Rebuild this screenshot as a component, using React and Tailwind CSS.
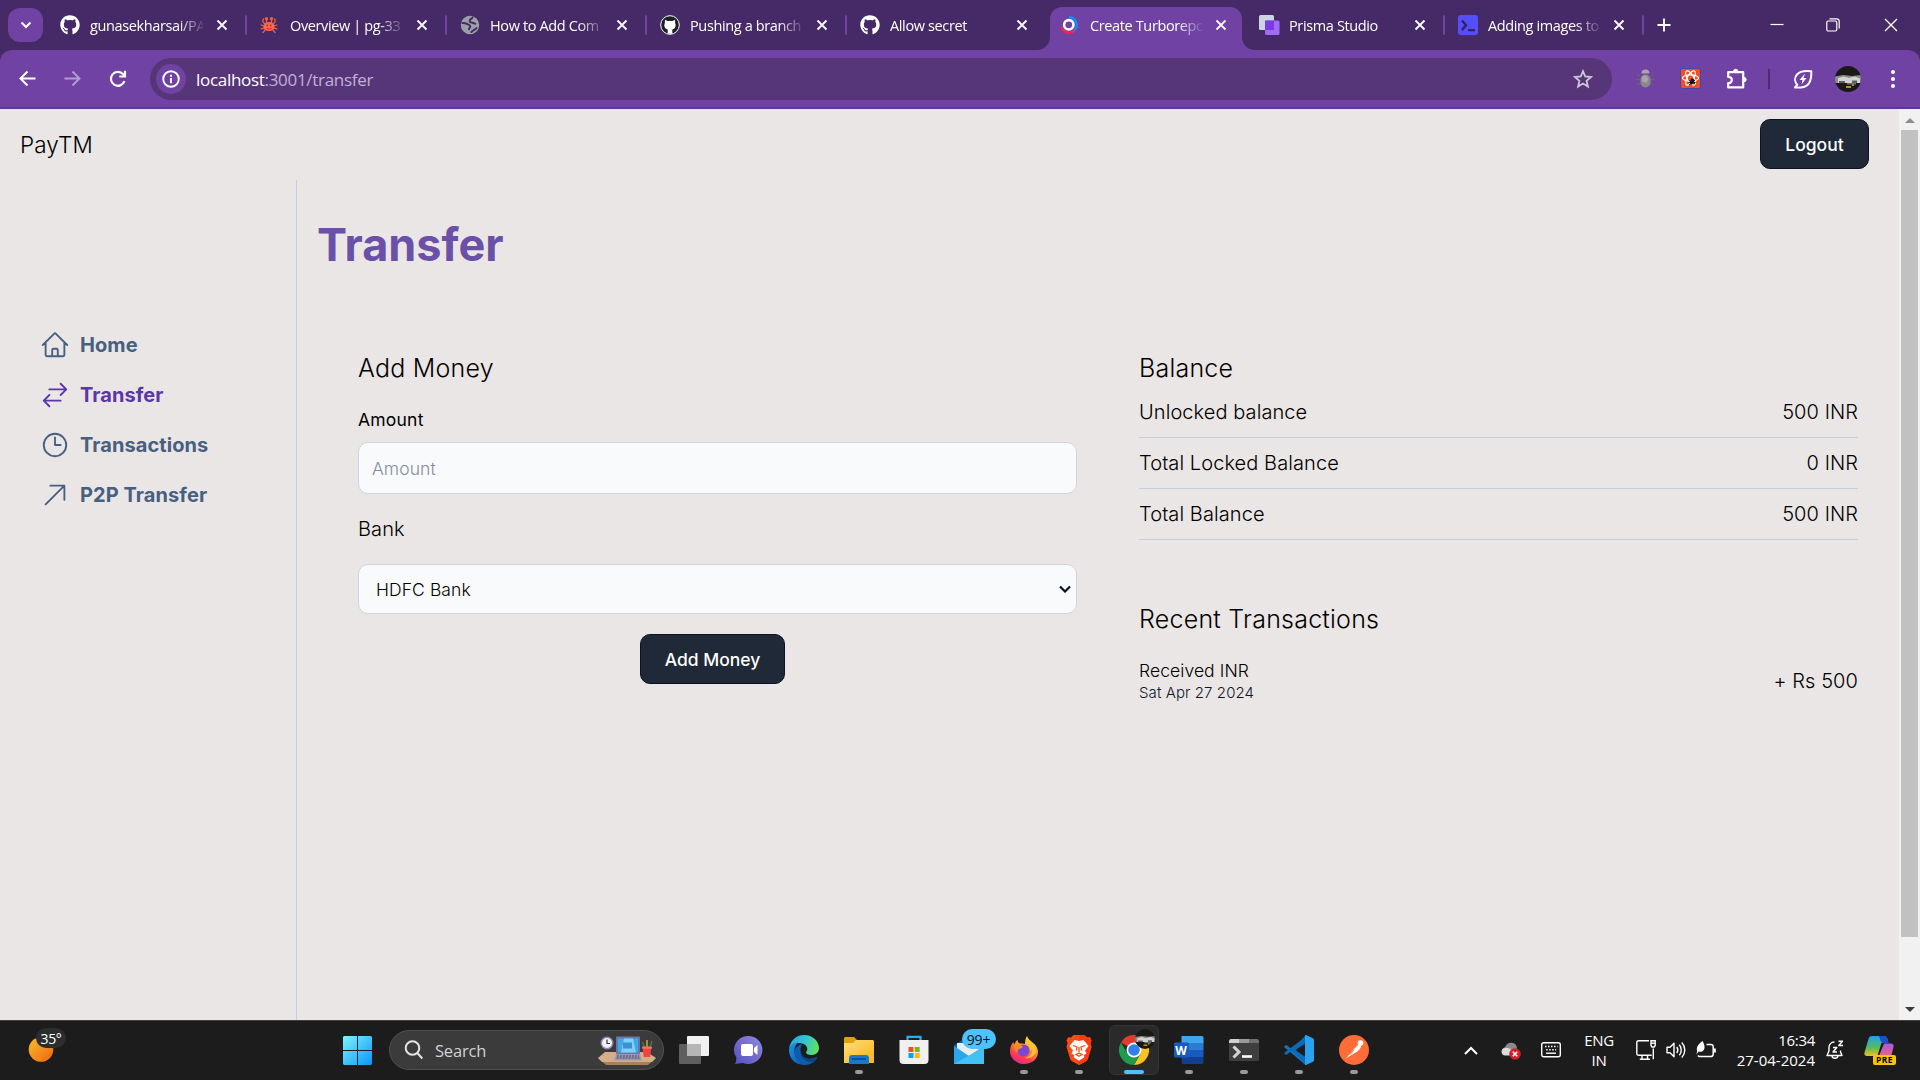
import { FaGithub } from "react-icons/fa";

const UI = "font-['Open_Sans','Noto_Sans',sans-serif]";

/* ---------- favicons ---------- */

const CrabIcon = () => (
  <svg width="18" height="20" viewBox="0 0 18 20">
    <g stroke="#f0603a" strokeWidth="1.3" fill="none" strokeLinecap="round">
      <path d="M4.500 8.500C2.500 7.500 2.500 5 3.500 4M13.500 8.500c2-1 2-3.500 1-4.500" />
      <path d="M4 11 1.200 10M14 11l2.800-1M4 13.200 1.200 13.800M14 13.200l2.800.6M5 15 3 17.500M13 15l2 2.500" />
    </g>
    <circle cx="6.500" cy="3.800" r="1.700" fill="#f0603a" />
    <circle cx="11.500" cy="3.800" r="1.700" fill="#f0603a" />
    <path d="M6.500 5v3M11.500 5v3" stroke="#f0603a" strokeWidth="1.300" />
    <ellipse cx="9" cy="11.500" rx="5.600" ry="4.600" fill="#ff6a4a" />
    <circle cx="7.200" cy="10.500" r=".9" fill="#e21b4c" />
    <circle cx="10.800" cy="10.500" r=".9" fill="#e21b4c" />
    <path d="M6.500 13c1 1.300 4 1.300 5 0" stroke="#e21b4c" strokeWidth="1.100" fill="none" />
  </svg>
);

const GlobeIcon = () => (
  <svg width="20" height="20" viewBox="0 0 20 20">
    <circle cx="10" cy="10" r="9.200" fill="#9aa0a6" />
    <path
      d="M2.500 8c2 0 3.500.3 5 1.200 1.500.8 2.700.8 2.800 2.300.1 1.300-1.300 1.500-1.300 2.800M12.500 2.500c-.5 1.500-2.500 1.500-2.800 3-.3 1.300.8 2 2 2 1.500.1 2 1.200 3.500 1.300M11.500 17c1-2 3.500-1.800 5-4"
      stroke="#462a67"
      strokeWidth="2"
      fill="none"
      strokeLinecap="round"
    />
  </svg>
);

const CatIcon = () => (
  <svg width="20" height="20" viewBox="0 0 20 20">
    <circle cx="10" cy="10" r="9.300" fill="#1c2128" stroke="#fff" strokeWidth="1" />
    <path
      d="M5.200 4.800 7.400 6h5.200l2.200-1.200c.5 1.300.4 2.200.2 3 1 1.400.9 4.600-.6 5.700-.6.5-1.300.8-2.100.9v4.400H7.700v-4.400c-.8-.1-1.500-.4-2.100-.9-1.500-1.100-1.600-4.300-.6-5.700-.2-.8-.3-1.700.2-3z"
      fill="#fff"
    />
  </svg>
);

const TurboIcon = () => (
  <svg width="18" height="18" viewBox="0 0 18 18">
    <defs>
      <linearGradient id="turbo" x1="1" y1="0" x2="0" y2="1">
        <stop offset="0.350" stopColor="#0096ff" />
        <stop offset="0.650" stopColor="#ff1e56" />
      </linearGradient>
    </defs>
    <path d="M9 1.200a7.800 7.800 0 1 1-7.600 9.600" fill="none" stroke="url(#turbo)" strokeWidth="2.300" />
    <circle cx="8.800" cy="8.800" r="4.700" fill="none" stroke="#fff" strokeWidth="2.600" />
  </svg>
);

const PrismaIcon = () => (
  <svg width="21" height="21" viewBox="0 0 21 21">
    <rect x="0" y="0" width="15" height="15" rx="1.500" fill="#cbd5e0" />
    <rect x="6" y="5.500" width="14.500" height="14.500" rx="1.500" fill="#9f6cf5" />
    <rect x="6" y="5.500" width="9" height="9.500" fill="#7b3be0" />
  </svg>
);

const PromptIcon = () => (
  <svg width="20" height="20" viewBox="0 0 20 20">
    <rect width="20" height="20" rx="3" fill="#544ffb" />
    <path d="m4 5.500 4 4.700L4 15" stroke="#33205c" strokeWidth="2.400" fill="none" />
    <path d="M10 15.200h7" stroke="#33205c" strokeWidth="2.200" />
  </svg>
);

const CloseX = ({ size = 12, w = 1.8 }) => (
  <svg width={size} height={size} viewBox="0 0 12 12" stroke="#fff" strokeWidth={w} fill="none">
    <path d="m1.500 1.500 9 9M10.500 1.500l-9 9" />
  </svg>
);

const TABS = [
  { icon: <FaGithub size={20} color="#fff" />, title: "gunasekharsai/PA", w: "w-[200px]", sep: true },
  { icon: <CrabIcon />, title: "Overview | pg-33", w: "w-[200px]", sep: true },
  { icon: <GlobeIcon />, title: "How to Add Com", w: "w-[200px]", sep: true },
  { icon: <CatIcon />, title: "Pushing a branch", w: "w-[200px]", sep: true },
  { icon: <FaGithub size={20} color="#fff" />, title: "Allow secret", w: "w-[200px]" },
  { icon: <TurboIcon />, title: "Create Turborepo", w: "w-[199px]", active: true },
  { icon: <PrismaIcon />, title: "Prisma Studio", w: "w-[199px]", sep: true },
  { icon: <PromptIcon />, title: "Adding images to", w: "w-[199px]", sep: true },
];

function Tab({ icon, title, w, sep, active }) {
  return (
    <div className={`relative h-[50px] shrink-0 ${w}`}>
      {active && (
        <div className="absolute top-[7px] bottom-0 left-[3px] right-[4px] rounded-t-[12px] bg-[#6f42a3]">
          <div className="absolute bottom-0 -left-[13px] size-[13px] bg-[#6f42a3]">
            <div className="size-full rounded-br-[13px] bg-[#462a67]" />
          </div>
          <div className="absolute bottom-0 -right-[13px] size-[13px] bg-[#6f42a3]">
            <div className="size-full rounded-bl-[13px] bg-[#462a67]" />
          </div>
        </div>
      )}
      <div className="relative flex h-full items-center pr-[19px] pl-[13px]">
        <span className="flex w-[30px] shrink-0 items-center">{icon}</span>
        <span
          className={`min-w-0 flex-1 overflow-hidden pt-px whitespace-nowrap text-[14.5px] leading-5 tracking-[-0.37px] text-white [mask-image:linear-gradient(to_right,#000_78%,transparent_102%)] ${UI}`}
        >
          {title}
        </span>
        <span className="ml-[13px] flex"><CloseX /></span>
        {sep && <span className="absolute top-[15px] right-0 h-[20px] w-[2.5px] rounded-full bg-[#6f42a3]" />}
      </div>
    </div>
  );
}

function TabStrip() {
  return (
    <div className="flex h-[50px] items-center bg-[#462a67]">
      <div className="ml-2 mr-1 flex h-[34px] w-[35px] items-center justify-center rounded-[12px] bg-[#6f42a3]">
        <svg width="12" height="8" viewBox="0 0 12 8" fill="none" stroke="#fff" strokeWidth="2">
          <path d="m1.500 1.500 4.500 4.500 4.500-4.500" />
        </svg>
      </div>
      {TABS.map((t, i) => (
        <Tab key={i} {...t} />
      ))}
      <svg className="ml-[13px]" width="14" height="14" viewBox="0 0 14 14" stroke="#fff" strokeWidth="1.900">
        <path d="M7 .5v13M.5 7h13" />
      </svg>
      <div className="ml-auto flex items-center pr-[21px]">
        <svg width="14" height="14" viewBox="0 0 14 14" stroke="#fff" strokeWidth="1.200">
          <path d="M.5 6.500h13" />
        </svg>
        <svg className="ml-[42px]" width="14" height="14" viewBox="0 0 14 14" fill="none" stroke="#fff" strokeWidth="1.200">
          <rect x=".8" y="3" width="10" height="10" rx="1.500" />
          <path d="M3.500.8h7.200A2.500 2.500 0 0 1 13.200 3.300v7.200" />
        </svg>
        <span className="ml-[43px] flex"><CloseX size={16} w={1} /></span>
      </div>
    </div>
  );
}

const Avatar = ({ size }) => (
  <svg width={size} height={size} viewBox="0 0 26 26">
    <defs>
      <clipPath id={`av${size}`}><circle cx="13" cy="13" r="13" /></clipPath>
    </defs>
    <g clipPath={`url(#av${size})`}>
      <rect width="26" height="26" fill="#191a18" />
      <path d="M0 10.500 8 9l9 1 9-1v8H0z" fill="#8d8d8d" />
      <path d="M3 12l6-1.500 5 1.500 6-1.500 5 2v4.500H3z" fill="#d4d2d0" />
      <path d="M4 15h6v2H4zM17 14.500h5V17h-5z" fill="#5e6066" />
      <path d="M11 20h5v2h-5zM17 18h2v2h-2z" fill="#c48a1d" />
      <path d="M12 17h9v1.500h-9z" fill="#6b6e75" />
    </g>
  </svg>
);

function Toolbar() {
  return (
    <div className="bg-[#462a67]">
      <div className="flex h-[59px] items-center rounded-t-[12px] border-b-2 border-[#62359a] bg-[#6f42a3]">
        <svg className="ml-[19px]" width="17" height="17" viewBox="0 0 17 17" fill="none" stroke="#fff" strokeWidth="2">
          <path d="M16.500 8.500H2M8.500 1.500l-7 7 7 7" />
        </svg>
        <svg className="ml-[28px]" width="17" height="17" viewBox="0 0 17 17" fill="none" stroke="#b39bcf" strokeWidth="2">
          <path d="M.5 8.500H15M8.500 1.500l7 7-7 7" />
        </svg>
        <svg className="ml-[28px]" width="18" height="18" viewBox="0 0 18 18" fill="none" stroke="#fff" strokeWidth="2.200">
          <path d="M15.500 11.200A7 7 0 1 1 14.200 4.200L16 6" />
          <path d="M16 .8V6.500h-5.700" />
        </svg>
        <div className="ml-[23px] flex h-[42px] w-[1462px] items-center rounded-full bg-[#563678] pr-[19px] pl-[6px]">
          <div className="flex size-[30px] items-center justify-center rounded-full bg-[#6f42a3]">
            <svg width="18" height="18" viewBox="0 0 18 18" fill="none" stroke="#fff" strokeWidth="1.900">
              <circle cx="9" cy="9" r="7.800" />
              <path d="M9 8v5.200M9 4.800v1.900" />
            </svg>
          </div>
          <span className={`ml-[10px] pt-[2px] text-[17px] tracking-[-0.3px] text-white ${UI}`}>
            localhost<span className="text-[#c4b1d8]">:3001/transfer</span>
          </span>
          <svg className="ml-auto" width="20" height="20" viewBox="0 0 20 20" fill="none" stroke="#cdc6d6" strokeWidth="1.800">
            <path d="m10 2.200 2.200 5.300 5.800.5-4.400 3.800 1.300 5.700-4.900-3-4.900 3 1.300-5.700L2 8l5.800-.5z" />
          </svg>
        </div>
        <svg className="ml-[24px]" width="19" height="19" viewBox="0 0 19 19">
          <g stroke="#6a6470" strokeWidth="1.300" fill="none">
            <path d="M4 7 1 5.500M4 10.500H0M4.500 13.500 1.500 16.500M15 7l3-1.500M15 10.500h4M14.500 13.500l3 3" />
          </g>
          <path d="M5.500 4.500a4 4 0 0 1 8 0z" fill="#a9a6ab" />
          <rect x="4.500" y="5.500" width="10" height="13" rx="5" fill="#8b898c" />
          <rect x="6" y="6.500" width="6" height="7" rx="3" fill="#a6a4a7" />
        </svg>
        <svg className="ml-[25px]" width="21" height="21" viewBox="0 0 21 21">
          <rect x=".5" y=".5" width="20" height="20" rx="2" fill="#f04e23" stroke="#3a47b5" />
          <g fill="none" stroke="#fff" strokeWidth="1.200">
            <ellipse cx="10.500" cy="10" rx="8" ry="3.200" />
            <ellipse cx="10.500" cy="10" rx="8" ry="3.200" transform="rotate(60 10.500 10)" />
            <ellipse cx="10.500" cy="10" rx="8" ry="3.200" transform="rotate(120 10.500 10)" />
          </g>
          <ellipse cx="12" cy="13.500" rx="2" ry="3.200" fill="#1a1a1a" transform="rotate(20 12 13.500)" />
          <path d="m8.500 12 6.500 4M9 17l6-5M8.500 14.500h7" stroke="#1a1a1a" strokeWidth="1" />
        </svg>
        <svg className="ml-[25px]" width="22" height="22" viewBox="0 0 22 22" fill="none" stroke="#fff" strokeWidth="2.200" strokeLinejoin="round">
          <path d="M2.200 4.200h15v15.200h-15v-4.400h.6a3 3 0 0 0 0-6h-.6z" />
          <path d="M7.500 3.500a2.200 2.200 0 0 1 4.400 0zM18 9.400a2.200 2.200 0 0 1 0 4.400z" fill="#fff" strokeWidth="1" />
        </svg>
        <span className="ml-[20px] h-[20px] w-[2px] bg-[#4e2d75]" />
        <svg className="ml-[23px]" width="20" height="20" viewBox="0 0 20 20" fill="none" stroke="#fff" strokeWidth="2">
          <path d="M2 18.500c4 .3 9 .5 12.500-2.500C18 13 18.500 7 18.300 2.300 13 1.500 7 2 4 5.500c-2.800 3.300-2.500 7.500.3 10.200z" strokeLinejoin="round" />
          <path d="M12 4.500 6.500 11h3l-1 4.500 5-6.500h-3z" fill="#fff" stroke="none" />
        </svg>
        <span className="ml-[22px] flex"><Avatar size={26} /></span>
        <svg className="ml-[30px]" width="4" height="20" viewBox="0 0 4 20" fill="#fff">
          <circle cx="2" cy="3" r="2" /><circle cx="2" cy="10" r="2" /><circle cx="2" cy="17" r="2" />
        </svg>
      </div>
    </div>
  );
}

/* ---------- page ---------- */

const NAV = [
  {
    label: "Home",
    d: "m2.250 12 8.954-8.955c.44-.439 1.152-.439 1.591 0L21.750 12M4.500 9.750v10.125c0 .621.504 1.125 1.125 1.125H9.750v-4.875c0-.621.504-1.125 1.125-1.125h2.250c.621 0 1.125.504 1.125 1.125V21h4.125c.621 0 1.125-.504 1.125-1.125V9.750M8.250 21h8.250",
  },
  {
    label: "Transfer",
    active: true,
    d: "M7.500 21 3 16.500m0 0L7.500 12M3 16.500h13.500m0-13.500L21 7.500m0 0L16.500 12M21 7.500H7.500",
  },
  { label: "Transactions", d: "M12 6v6h4.500m4.500 0a9 9 0 1 1-18 0 9 9 0 0 1 18 0Z" },
  { label: "P2P Transfer", d: "m4.500 19.500 15-15m0 0H8.250m11.250 0v11.250" },
];

function Sidebar() {
  return (
    <aside className="w-[297px] shrink-0 border-r border-[#c5cddb] pt-[140px]">
      {NAV.map((n) => (
        <div
          key={n.label}
          className={`flex h-[50px] items-center gap-[10px] pl-[40px] ${n.active ? "text-[#5b36a8]" : "text-[#475f80]"}`}
        >
          <svg width="30" height="30" viewBox="0 0 24 24" fill="none" stroke="currentColor" strokeWidth="1.500" strokeLinecap="round" strokeLinejoin="round">
            <path d={n.d} />
          </svg>
          <span className="text-[20px] leading-[30px] font-bold">{n.label}</span>
        </div>
      ))}
    </aside>
  );
}

const Card = ({ title, className, children }) => (
  <section className={`rounded-[10px] border border-[#e8e6ea] px-[20px] pt-[21px] ${className}`}>
    <h2 className="border-b border-[#e6e5ea] pb-[10px] text-[25px] leading-[35px] tracking-[0.009em]">{title}</h2>
    {children}
  </section>
);

const Row = ({ label, value }) => (
  <div className="flex h-[51px] items-center justify-between border-b border-[#c3cddc] text-[20px]">
    <span>{label}</span>
    <span>{value}</span>
  </div>
);

function Content() {
  return (
    <div className="flex-1 pt-[40px] pr-[20px] pl-[20px]">
      <h1 className="text-[45px] leading-[50px] font-bold tracking-normal text-[#6a50a7]">Transfer</h1>
      <div className="mt-[59px] flex items-start gap-[20px] pl-[20px]">
        <Card title="Add Money" className="h-[383px] w-[761px]">
          <label className="mt-[10px] block text-[17.5px] leading-[25px] font-normal tracking-[0.012em]">Amount</label>
          <div className="mt-[10px] flex h-[52px] items-center rounded-[10px] border border-[#d1d5db] bg-[#f9fafb] px-[13px] pt-[2px] text-[17.5px] text-[#858d9b]">
            Amount
          </div>
          <div className="mt-[20px] text-[20px] leading-[30px]">Bank</div>
          <div className="mt-[20px] flex h-[50px] items-center justify-between rounded-[10px] border border-[#d1d5db] bg-[#f9fafb] pr-[5px] pl-[17px] text-[17.5px] text-black">
            <span className="pt-[2px]">HDFC Bank</span>
            <svg width="12" height="8" viewBox="0 0 12 8" fill="none" stroke="#0b1220" strokeWidth="2.200">
              <path d="m1 1.500 5 5 5-5" />
            </svg>
          </div>
          <div className="mt-[20px] flex justify-center pr-[10px]">
            <button className="h-[50px] rounded-[10px] border border-[#0b1222] bg-[#1f2937] px-[24px] text-[17.5px] leading-[25px] font-medium tracking-normal text-white">
              Add Money
            </button>
          </div>
        </Card>
        <div className="flex flex-col gap-[20px]">
          <Card title="Balance" className="h-[232px] w-[761px] [&>h2]:-mb-[10px]">
            <Row label="Unlocked balance" value="500 INR" />
            <Row label="Total Locked Balance" value="0 INR" />
            <Row label="Total Balance" value="500 INR" />
          </Card>
          <Card title="Recent Transactions" className="-mt-px h-[142px] w-[761px]">
            <div className="mt-[10px] flex items-center justify-between">
              <div>
                <div className="text-[17.5px] leading-[25px]">Received INR</div>
                <div className="text-[15px] leading-[20px] text-[#0f172a]">Sat Apr 27 2024</div>
              </div>
              <div className="text-[20px]">+ Rs 500</div>
            </div>
          </Card>
        </div>
      </div>
    </div>
  );
}

function Page() {
  return (
    <div className="flex min-h-0 flex-1 bg-[#eae6e5] font-[Inter,sans-serif] font-light tracking-[0.005em] text-black">
      <div className="flex flex-1 flex-col">
        <header className="flex h-[71px] items-center justify-between pr-[30px] pl-[20px]">
          <span className="text-[22.5px]">PayTM</span>
          <button className="mb-px h-[50px] w-[109px] rounded-[10px] border border-[#0b1222] bg-[#1f2937] text-[17.5px] leading-[25px] font-medium tracking-normal text-white">
            Logout
          </button>
        </header>
        <div className="flex flex-1">
          <Sidebar />
          <Content />
        </div>
      </div>
      <div className="flex w-[21px] flex-col items-center bg-[#f1f1f1]">
        <div className="flex h-[21px] items-end pb-[7px]">
          <svg width="10" height="5" viewBox="0 0 10 5"><path d="M0 5 5 0l5 5z" fill="#8f8f8f" /></svg>
        </div>
        <div className="h-[807px] w-[17px] bg-[#c1c1c1]" />
        <div className="mt-auto flex h-[21px] items-center">
          <svg width="10" height="5" viewBox="0 0 10 5"><path d="m0 0 5 5 5-5z" fill="#3b3b3b" /></svg>
        </div>
      </div>
    </div>
  );
}

/* ---------- taskbar ---------- */

const WindowsLogo = () => (
  <svg width="29" height="29" viewBox="0 0 29 29">
    <defs>
      <linearGradient id="win" x1="0" y1="0" x2="1" y2="1">
        <stop offset="0" stopColor="#7df3ff" />
        <stop offset="1" stopColor="#0a96f5" />
      </linearGradient>
    </defs>
    <path d="M1 0h13v14H0V1zM15 0h13l1 1v13H15zM0 15h14v14H1l-1-1zM15 15h14v13l-1 1H15z" fill="url(#win)" />
  </svg>
);

const DeskArt = () => (
  <svg width="60" height="34" viewBox="0 0 60 34">
    <path d="M1 25h58l-8 7H9z" fill="#a97f58" />
    <path d="m1 25 7-6h42l9 6-4 4H5z" fill="#d3ae88" />
    <circle cx="10" cy="10" r="6.500" fill="#8b86b8" />
    <circle cx="10" cy="10" r="5" fill="#f3f1f8" />
    <path d="M10 6.500v4h3" stroke="#333" strokeWidth="1.200" fill="none" />
    <rect x="19" y="3.500" width="24" height="18" rx="1" fill="#6f74a8" />
    <rect x="21" y="5.500" width="20" height="14" fill="#3fa9ea" />
    <path d="M27 5.500h9l3 14H24z" fill="#7fd0fa" />
    <rect x="26" y="9.500" width="9" height="6" fill="#3d8fd0" />
    <path d="M19 21h24l1.500 6.500h-27z" fill="#9a97b5" />
    <path d="M20 23h22M19.500 25h23" stroke="#4d4a66" strokeWidth="1" strokeDasharray="2 1" />
    <path d="m47.500 15-2-6M53 14l2-6" stroke="#2f7d63" strokeWidth="1.600" />
    <path d="M50 14V7" stroke="#d79a2b" strokeWidth="1.600" />
    <path d="M45.500 14h9l-1.300 10h-6.400z" fill="#ee4543" />
    <rect x="45" y="13.500" width="10" height="2.200" rx="1" fill="#ff6f66" />
  </svg>
);

const TaskView = () => (
  <svg width="30" height="30" viewBox="0 0 30 30">
    <rect x="0" y="9" width="22" height="20" rx="1" fill="#5f5f5f" />
    <rect x="8" y="1" width="22" height="20" rx="1" fill="#f1f1f1" />
    <path d="M8 9h14v12H8z" fill="#b5b5b5" />
  </svg>
);

const Chat = () => (
  <svg width="30" height="30" viewBox="0 0 30 30">
    <defs>
      <linearGradient id="chat" x1="1" y1="0" x2="0" y2="1">
        <stop offset="0" stopColor="#7d92ef" />
        <stop offset=".35" stopColor="#8073d0" />
        <stop offset="1" stopColor="#4f52c2" />
      </linearGradient>
    </defs>
    <path d="M15 1a14.200 14 0 1 1-6 27l-8 1c1-2 1.300-4 1.300-6.500A14 14 0 0 1 15 1z" fill="url(#chat)" />
    <rect x="7" y="9" width="12" height="12" rx="2" fill="#fff" />
    <path d="m20 13 3.500-3v10L20 17z" fill="#fff" />
  </svg>
);

const Edge = () => (
  <svg width="30" height="30" viewBox="0 0 30 30">
    <defs>
      <linearGradient id="edgeTop" x1="0" y1="0.300" x2="1" y2="0.500">
        <stop offset="0" stopColor="#2aa8e6" />
        <stop offset=".5" stopColor="#31c4d4" />
        <stop offset="1" stopColor="#62e05a" />
      </linearGradient>
      <linearGradient id="edgeBot" x1="0" y1="0" x2="1" y2="1">
        <stop offset="0" stopColor="#1a9be6" />
        <stop offset="1" stopColor="#0a4fa8" />
      </linearGradient>
    </defs>
    <path d="M0 14C1 6 7 0 15 0c9 0 15 6.500 15 13 0 4.500-3.500 7-7.500 7-3.500 0-5.500-1.200-5.500-2.500 0-.8 1.300-1.500 1.300-3.500C18.300 10 14 8 10 8 5 8 1 10.500 0 14z" fill="url(#edgeTop)" />
    <path d="M0 15c.3-5 5-8 9.500-7.500-3 2-4.500 5.500-4 9.500.6 6 5 11.500 10.500 12.800C7 30.500 0 24 0 15z" fill="url(#edgeBot)" />
    <path d="M13 9c-4.500 1.500-7.700 4.300-7.500 8.500C5.800 24 10.500 30 16 30c5 0 9.500-3 12-7 .3-.7-.2-1-.8-.7C22 25 12.500 24.500 11.500 16c-.2-3 .7-5 1.500-7z" fill="#0c5cb0" />
    <path d="M11.500 15c0 8 8.500 11.500 15.700 7.300.6-.3 1.100 0 .8.700-1 1.800-2.500 3.300-4.300 4.500C16 27 10.500 22 11.500 15z" fill="#0d4684" />
  </svg>
);

const Folder = () => (
  <svg width="30" height="30" viewBox="0 0 30 30">
    <defs>
      <linearGradient id="fold" x1="0" y1="0" x2="1" y2="1">
        <stop offset="0" stopColor="#ffe07a" />
        <stop offset="1" stopColor="#fbb21a" />
      </linearGradient>
    </defs>
    <path d="M1 2h9l3 3v6H0V3z" fill="#e0a00f" />
    <path d="M0 8h9l3-3h17l1 1v22H0z" fill="url(#fold)" />
    <path d="M5 29v-6c0-2 1-3 3-3h14c2 0 3 1 3 3v6z" fill="#1579cf" />
    <path d="M8 24h14" stroke="#0b4f96" strokeWidth="2" />
  </svg>
);

const Store = () => (
  <svg width="30" height="30" viewBox="0 0 30 30">
    <path d="M8.500 6V1.800h13V6" fill="none" stroke="#23aef0" strokeWidth="2.200" />
    <path d="M.5 5h29v20a4 4 0 0 1-4 4h-21a4 4 0 0 1-4-4z" fill="#f0f0f0" />
    <path d="M9.500 12h5v5h-5z" fill="#f25022" />
    <path d="M15.700 12h5v5h-5z" fill="#7fba00" />
    <path d="M9.500 18h5v5h-5z" fill="#00a4ef" />
    <path d="M15.700 18h5v5h-5z" fill="#ffb900" />
  </svg>
);

const Mail = () => (
  <div className="relative size-[30px]">
    <svg width="30" height="30" viewBox="0 0 30 30">
      <path d="M0 10 15 1l15 9v6H0z" fill="#0f5ca8" />
      <path d="M3 8h24v8l-12 6L3 14z" fill="#e9eef2" />
      <path d="M0 11l15 10 15-10v18H0z" fill="#2aa7ec" />
      <path d="M0 29 30 12v17z" fill="#43c0f5" />
    </svg>
    <span className={`absolute -top-[6px] left-[8px] flex h-[20px] w-[34px] items-center justify-center rounded-full bg-[#4cc2ff] text-[14px] tracking-[-0.2px] text-[#111] ${UI}`}>
      99+
    </span>
  </div>
);

const Firefox = () => (
  <svg width="30" height="30" viewBox="0 0 30 30">
    <defs>
      <linearGradient id="ff" x1=".8" y1="0" x2=".3" y2="1">
        <stop offset="0" stopColor="#fff04a" />
        <stop offset=".4" stopColor="#ff9a2a" />
        <stop offset=".75" stopColor="#ff3d50" />
        <stop offset="1" stopColor="#e0228c" />
      </linearGradient>
    </defs>
    <path d="M18 1c1 3 3 4 5 6 4 3 6 6 6 10 0 7-6 12-14 12S1 23 1 16c0-4 1.500-7 3.500-9 0 1 .3 2 .8 2.500C6.500 6.500 8 5 8.500 5c0 1.500 1 3 2.500 3.500 2-.2 4 0 5 .5 0-3 .5-6 2-8z" fill="url(#ff)" />
    <circle cx="14.500" cy="15.500" r="6" fill="#7b45d6" />
    <path d="M5 10c3-2 6 0 9 1.500-1.500 2.500-5 2-5.500 4.500S5 16 5 10z" fill="#ff8a22" />
    <path d="M16 8c3 1 5.500 4 5 8 1.500-1 2-2.500 2-4 1.500 5-1.500 10-7 11 4 1 9-1.500 11-6 0-5-3-8-7-11z" fill="#ffc336" />
  </svg>
);

const Brave = () => (
  <svg width="30" height="30" viewBox="0 0 30 30">
    <path d="M9.500 0h11l2.500 2.500 3-.3 1.500 3.300-1 2.500 1 4-3.500 11.500c-.5 1.500-1.300 2.300-2.500 3L15 30l-6.500-3.500c-1.200-.7-2-1.500-2.500-3L2.500 12l1-4-1-2.500L4 2.200l3 .3z" fill="#fb4a12" />
    <path d="M15 0h5.500L23 2.500l3-.3 1.500 3.300-1 2.500 1 4L24 23.500c-.5 1.500-1.300 2.300-2.500 3L15 30z" fill="#ff3a0c" />
    <path d="m15 6 4.500-1 5 6-3.500 4.500 1.500 3-3 1.800 1 2-5.500 3.500L9.500 22.300l1-2-3-1.800 1.500-3L5.500 11l5-6z" fill="#fff" />
    <path d="M9 10.500 13 12l-.7 3.500M21 10.500 17 12l.7 3.500M12 19.500l3-1.500 3 1.500-3 1.800zM15 12v5" stroke="#fb4a12" strokeWidth="1.300" fill="none" />
  </svg>
);

const Chrome = () => (
  <div className="relative size-[30px]">
    <svg width="30" height="30" viewBox="0 0 30 30">
      <path d="M15 15 2 7.500A15 15 0 0 1 28 7.500z" fill="#e33b2e" />
      <path d="M15 7.500h13A15 15 0 0 1 15 30l6.500-11.200z" fill="#fcc31e" />
      <path d="M2 7.500A15 15 0 0 0 15 30l6.500-11.200L15 15l-6.500 3.800z" fill="#1e9b4c" />
      <circle cx="15" cy="15" r="7.500" fill="#fff" />
      <circle cx="15" cy="15" r="5.800" fill="#2f80ee" />
    </svg>
    <span className="absolute -top-[6px] -right-[6px]"><Avatar size={20} /></span>
  </div>
);

const Word = () => (
  <div className="relative size-[30px]">
    <svg width="30" height="30" viewBox="0 0 30 30">
      <path d="M8 1h20a1.500 1.500 0 0 1 1.500 1.500V8h-22V1z" fill="#41a5ee" />
      <path d="M7.500 8h22v7h-22z" fill="#2b7cd3" />
      <path d="M7.500 15h22v7h-22z" fill="#185abd" />
      <path d="M7.500 22h22v6L28 29H8z" fill="#103f91" />
      <rect x="0" y="7.500" width="15" height="15" rx="1.500" fill="#185abd" />
    </svg>
    <span className={`absolute top-[8px] left-0 w-[15px] text-center text-[12px] leading-[15px] font-bold text-white ${UI}`}>W</span>
  </div>
);

const Terminal = () => (
  <svg width="30" height="30" viewBox="0 0 30 30">
    <rect x="0" y="4" width="30" height="22" rx="1.500" fill="#3f3f3f" />
    <path d="M0 8V5.500L1.500 4H10v4z" fill="#d0d0d0" />
    <path d="M10 4h10v4H10z" fill="#9a9a9a" />
    <path d="M20 4h8.500L30 5.500V8H20z" fill="#6f6f6f" />
    <path d="m4.500 11.500 5.500 5.500-5.500 5.500" stroke="#d4d4d4" strokeWidth="3" fill="none" />
    <path d="M13 21.500h10" stroke="#fff" strokeWidth="2.600" />
  </svg>
);

const VSCode = () => (
  <svg width="30" height="30" viewBox="0 0 30 30">
    <path d="M22 0 8 14.500 2.500 10 .5 11v1.500l4 3L21.500 30V7z" fill="#1177c4" />
    <path d="M22 30 8 15.500 2.500 20 .5 19v-1.500L21.500 2v28z" fill="#0a6ab5" />
    <path d="M22 8 11.500 15 22 22.500z" fill="#1c1c1c" />
    <path d="M22 0l7 3.200 1 1.300v21l-1 1.300L22 30c-.5.200-1 0-1-.7V.7c0-.7.500-.9 1-.7z" fill="#27a3f2" />
  </svg>
);

const Postman = () => (
  <svg width="30" height="30" viewBox="0 0 30 30">
    <circle cx="15" cy="15" r="15" fill="#ff6c37" />
    <circle cx="21.500" cy="8" r="2.800" fill="#fff" />
    <path d="m19.500 9.500 2.500 1.800c0 2-2 3.500-4 5.500L12.500 20 7 23.500 11.500 18l3-3.500z" fill="#fff" />
    <path d="m15 15-4.500 5" stroke="#ff6c37" strokeWidth=".9" />
  </svg>
);

const APPS = [
  { id: "taskview", icon: <TaskView /> },
  { id: "chat", icon: <Chat /> },
  { id: "edge", icon: <Edge /> },
  { id: "folder", icon: <Folder />, dot: true },
  { id: "store", icon: <Store /> },
  { id: "mail", icon: <Mail /> },
  { id: "firefox", icon: <Firefox />, dot: true },
  { id: "brave", icon: <Brave />, dot: true },
  { id: "chrome", icon: <Chrome />, active: true },
  { id: "word", icon: <Word />, dot: true },
  { id: "terminal", icon: <Terminal />, dot: true },
  { id: "vscode", icon: <VSCode />, dot: true },
  { id: "postman", icon: <Postman />, dot: true },
];

function Taskbar() {
  return (
    <div className={`flex h-[60px] items-center border-t border-[#414141] bg-[#1c1c1c] pb-px text-white ${UI}`}>
      <div className="relative ml-[28px] h-[40px] w-[315px]">
        <svg width="26" height="40" viewBox="0 0 26 40">
          <defs>
            <linearGradient id="sun" x1="0" y1="0" x2="1" y2="1">
              <stop offset="0" stopColor="#f5c02c" />
              <stop offset="1" stopColor="#f0620f" />
            </linearGradient>
          </defs>
          <circle cx="13" cy="19.500" r="12.300" fill="url(#sun)" />
        </svg>
        <span className="absolute -top-[2px] left-[8px] flex h-[20px] w-[30px] items-center justify-center rounded-full bg-[#2d2d2d] text-[14px] tracking-[-0.4px]">
          35°
        </span>
      </div>
      <WindowsLogo />
      <div className="ml-[17px] flex h-[40px] w-[275px] items-center rounded-full border border-[#505050] bg-[#3b3b3b] pr-[6px] pl-[14px]">
        <svg width="20" height="20" viewBox="0 0 20 20" fill="none" stroke="#e4e4e4" strokeWidth="2">
          <circle cx="8.500" cy="8" r="6.800" />
          <path d="m13.300 13 5 5.500" />
        </svg>
        <span className="ml-[11px] pt-[2px] text-[16.5px] tracking-[-0.2px] text-[#d2d2d2]">Search</span>
        <span className="ml-auto flex"><DeskArt /></span>
      </div>
      <div className="ml-[2px] flex">
        {APPS.map((a) => (
          <div key={a.id} className="flex w-[55px] justify-center">
            <div
              className={`relative flex size-[50px] items-center justify-center rounded-[6px] border ${
                a.active ? "border-[#353535] bg-[#2a2a2a]" : "border-transparent"
              }`}
            >
              {a.icon}
              {a.dot && <span className="absolute bottom-0 left-[20px] h-[4px] w-[8px] rounded-full bg-[#999]" />}
              {a.active && <span className="absolute bottom-0 left-[14px] h-[4px] w-[20px] rounded-full bg-[#4cc2ff]" />}
            </div>
          </div>
        ))}
      </div>
      <div className="ml-auto flex items-center pr-[16px] [&>*]:shrink-0">
        <span className="flex w-[40px] justify-center">
          <svg width="14" height="9" viewBox="0 0 14 9" fill="none" stroke="#fff" strokeWidth="2">
            <path d="m1 8 6-6 6 6" />
          </svg>
        </span>
        <span className="flex w-[40px] justify-center">
          <svg width="20" height="20" viewBox="0 0 20 20">
            <path d="M5 14a4 4 0 0 1-.5-7.500A6 6 0 0 1 16 8l-2 6z" fill="#8a8a8a" />
            <path d="M4.500 15.500a3.800 3.800 0 0 1-.3-7.600C7 7 10 9 12 12l-3 3.500z" fill="#dcdcdc" />
            <circle cx="14" cy="14" r="5.800" fill="#d4202c" />
            <path d="m11.800 11.800 4.400 4.400m0-4.400-4.400 4.400" stroke="#fff" strokeWidth="1.500" />
          </svg>
        </span>
        <span className="flex w-[40px] justify-center">
          <svg width="20" height="16" viewBox="0 0 20 16" fill="none" stroke="#fff" strokeWidth="1.400">
            <rect x=".7" y=".7" width="18.600" height="14.100" rx="2" />
            <path d="M4 4.500h12.500M5.200 7.700h10" strokeDasharray="1.500 1.500" strokeWidth="1.500" />
            <path d="M5 11.200h10" />
          </svg>
        </span>
        <span className="w-[56px] text-center text-[15px] leading-[20px] tracking-[-0.3px]">ENG<br />IN</span>
        <span className="ml-[4px] flex w-[30px] justify-center">
          <svg width="20" height="20" viewBox="0 0 20 20" fill="none" stroke="#fff" strokeWidth="1.400">
            <path d="M13 .8H2.500A1.700 1.700 0 0 0 .8 2.500v11a1.700 1.700 0 0 0 1.700 1.700h13.200M6 15.500v3.500M11.500 15.500v3.500M3.800 19.200H14M17.300 8.500v10.700" />
            <path d="M15 .8h4.200v4.700l-1 1.500h-2.200l-1-1.500z" />
            <path d="M15 3.200h4" />
          </svg>
        </span>
        <span className="flex w-[30px] justify-center">
          <svg width="20" height="18" viewBox="0 0 20 18" fill="none" stroke="#fff" strokeWidth="1.400" strokeLinejoin="round">
            <path d="M1 6.200h3l4-4v13.600l-4-4H1z" />
            <path d="M10.800 6c1.300 1.800 1.300 4.200 0 6M13.300 3.800c2.600 3 2.600 7.400 0 10.400M15.800 1.500c4 4.500 4 10.500 0 15" />
          </svg>
        </span>
        <span className="flex w-[30px] justify-center">
          <svg width="20" height="18" viewBox="0 0 20 18" fill="none" stroke="#fff" strokeWidth="1.500">
            <path d="M10.500 3.500H15a2.200 2.200 0 0 1 2.200 2.200v7.600A2.200 2.200 0 0 1 15 15.500H3.500A2.200 2.200 0 0 1 2 14.500" />
            <path d="M18.600 7.500v4" strokeWidth="2.500" />
            <path d="M6.500 0c2 3 3 7 .8 9.500-1.600 1.700-3.500 1.500-4.800 1L.5 13.500l.6-3.500C-.2 6 2.800 2.500 6.500 0z" fill="#fff" stroke="none" />
          </svg>
        </span>
        <span className="w-[94px] text-right text-[15px] leading-[20px] whitespace-nowrap">
          <span className="tracking-[-0.3px]">16:34</span><br />27-04-2024
        </span>
        <span className="flex w-[39px] justify-center">
          <svg width="18" height="20" viewBox="0 0 18 20" fill="none" stroke="#fff" strokeWidth="1.400" strokeLinejoin="round">
            <path d="M8.500 2C5 2 3 4.500 3 7.500V11L1 15.500h15L14.500 12v-1.500M6 16c.3 3 5.500 3 6 0" />
            <path d="M7 7.500h3.800L7 12h4M12.500 1.200h4L12.800 5.500H17" />
          </svg>
        </span>
        <span className="relative flex w-[50px] justify-center">
          <svg width="30" height="30" viewBox="0 0 30 30">
            <defs>
              <linearGradient id="cp1" x1="0" y1="0" x2="0" y2="1">
                <stop offset="0" stopColor="#18a4ee" />
                <stop offset=".6" stopColor="#5cb95a" />
                <stop offset="1" stopColor="#f0c419" />
              </linearGradient>
              <linearGradient id="cp2" x1="0" y1="0" x2="0" y2="1">
                <stop offset="0" stopColor="#a45ae8" />
                <stop offset="1" stopColor="#f2627a" />
              </linearGradient>
            </defs>
            <path d="M8 1h12c2 0 3 1.500 3.500 3l1 4h-7l-3.500 11c-.5 1.500-1.500 2-3 2H3c-2 0-3-1.500-2.500-3.500L4.500 4C5 2 6 1 8 1z" fill="url(#cp1)" />
            <path d="M15 1h5c2 0 3 1.500 3.500 3l1 4h-5c-1.500 0-2.500-1-3-2.500z" fill="#1750c8" />
            <path d="M20 8.500h7c2 0 3 1.500 2.500 3.500L27 22H14.500z" fill="url(#cp2)" />
          </svg>
          <span className="absolute right-[8px] bottom-0 flex h-[10px] w-[23px] items-center justify-center rounded-[2px] bg-[#fdc307] text-[8.5px] font-bold tracking-[0.4px] text-black">
            PRE
          </span>
        </span>
      </div>
    </div>
  );
}

export default function App() {
  return (
    <div className="flex h-[1080px] w-[1920px] flex-col overflow-hidden">
      <TabStrip />
      <Toolbar />
      <Page />
      <Taskbar />
    </div>
  );
}
